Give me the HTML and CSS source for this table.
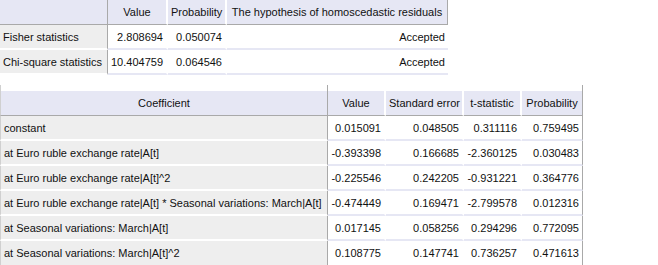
FILE: index.html
```html
<!DOCTYPE html>
<html>
<head>
<meta charset="utf-8">
<link rel="stylesheet" href="styles.css">
</head>
<body>
<table class="grid top">
  <colgroup><col class="c-h1"><col class="c-v1"><col class="c-p1"><col class="c-hy"></colgroup>
  <thead>
    <tr><th class="corner"></th><th>Value</th><th>Probability</th><th class="last">The hypothesis of homoscedastic residuals</th></tr>
  </thead>
  <tbody>
    <tr><td class="rh">Fisher statistics</td><td class="num">2.808694</td><td class="num">0.050074</td><td class="num">Accepted</td></tr>
    <tr><td class="rh">Chi-square statistics</td><td class="num">10.404759</td><td class="num">0.064546</td><td class="num">Accepted</td></tr>
  </tbody>
</table>
<div class="bottom-wrap">
<table class="grid bottom">
  <colgroup><col class="c-coef"><col class="c-val"><col class="c-se"><col class="c-t"><col class="c-p"></colgroup>
  <thead>
    <tr class="spacer"><td class="sp rh-sp"></td><td class="sp"></td><td class="sp"></td><td class="sp"></td><td class="sp last"></td></tr>
    <tr><th class="coefh">Coefficient</th><th>Value</th><th>Standard error</th><th>t-statistic</th><th class="last">Probability</th></tr>
  </thead>
  <tbody>
    <tr><td class="rh">constant</td><td class="num">0.015091</td><td class="num">0.048505</td><td class="num">0.311116</td><td class="num last">0.759495</td></tr>
    <tr><td class="rh">at Euro ruble exchange rate|A[t]</td><td class="num">-0.393398</td><td class="num">0.166685</td><td class="num">-2.360125</td><td class="num last">0.030483</td></tr>
    <tr><td class="rh">at Euro ruble exchange rate|A[t]^2</td><td class="num">-0.225546</td><td class="num">0.242205</td><td class="num">-0.931221</td><td class="num last">0.364776</td></tr>
    <tr><td class="rh">at Euro ruble exchange rate|A[t] * Seasonal variations: March|A[t]</td><td class="num">-0.474449</td><td class="num">0.169471</td><td class="num">-2.799578</td><td class="num last">0.012316</td></tr>
    <tr><td class="rh">at Seasonal variations: March|A[t]</td><td class="num">0.017145</td><td class="num">0.058256</td><td class="num">0.294296</td><td class="num last">0.772095</td></tr>
    <tr class="final"><td class="rh">at Seasonal variations: March|A[t]^2</td><td class="num">0.108775</td><td class="num">0.147741</td><td class="num">0.736257</td><td class="num last">0.471613</td></tr>
  </tbody>
</table>
</div>
</body>
</html>
```
FILE: styles.css
```css
html, body {
  margin: 0;
  padding: 0;
  background: #ffffff;
}
body {
  font-family: "Liberation Sans", Arial, sans-serif;
  font-size: 11px;
  color: #111;
}
.grid {
  border-collapse: separate;
  border-spacing: 0;
  table-layout: fixed;
}
.grid th, .grid td {
  height: 23px;
  padding: 0 3px;
  white-space: nowrap;
  overflow: hidden;
  box-sizing: border-box;
}
.grid th {
  background: #e6e7f4;
  font-weight: normal;
  text-align: center;
  border-right: 2px solid #ffffff;
  border-bottom: 1px solid #a9a9a9;
  height: 25px;
}
.grid th.last {
  border-right: 1px solid #a9a9a9;
}
.grid td {
  border-bottom: 2px solid #e6e7f4;
  border-right: 2px solid #ffffff;
  height: 25px;
}
.grid td.rh {
  background: #eeeeee;
  border-right: 1px solid #a9a9a9;
  border-bottom: 2px solid #ffffff;
  text-align: left;
}
.grid th.corner {
  border-right: 1px solid #a9a9a9;
}
.grid td.num {
  text-align: right;
}
.grid td.last {
  border-right: 1px solid #a9a9a9;
}
.top { width: 448px; }
.c-h1 { width: 108px; }
.c-v1 { width: 60px; }
.c-p1 { width: 59px; }
.c-hy { width: 221px; }
.top td { border-right-color: #ffffff; }
.top td.num:last-child { border-right: none; }

.bottom-wrap {
  padding-top: 10px;
}
.bottom { width: 583px; }
.c-coef { width: 328px; }
.c-val { width: 58px; }
.c-se { width: 78px; }
.c-t { width: 58px; }
.c-p { width: 61px; }
.bottom tr.spacer td.sp {
  height: 6px;
  background: #ffffff;
  border-bottom: none;
  border-right: 2px solid #ffffff;
}
.bottom tr.spacer td.rh-sp {
  border-right: 1px solid #a9a9a9;
  border-left: 1px solid #d0d0d0;
}
.bottom tr.spacer td.sp.last {
  border-right: 1px solid #a9a9a9;
}
.bottom th.coefh {
  border-right: 1px solid #a9a9a9;
  border-left: 1px solid #d0d0d0;
}
.bottom td.rh {
  border-left: 1px solid #d0d0d0;
}
.bottom tr.final td {
  border-bottom: 1px solid #a9a9a9;
}
```
